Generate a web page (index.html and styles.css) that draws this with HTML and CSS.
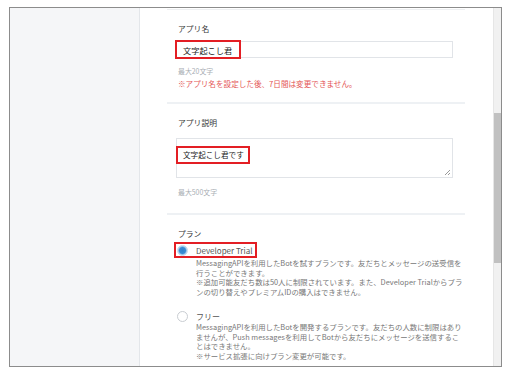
FILE: index.html
```html
<!DOCTYPE html>
<html lang="ja">
<head>
  <meta charset="UTF-8" />
  <meta name="viewport" content="width=device-width, initial-scale=1.0"/>
  <title>チャネル設定</title>
  <link rel="stylesheet" href="styles.css">
</head>
<body>

  <div class="frame">
    <aside class="sidebar"></aside>

    <main class="main">
      <div class="content">
        <div class="card">

          <!-- アプリ名 -->
          <section class="field">
            <div class="label">アプリ名</div>
            <div class="input">
              <span class="mark mark-name">文字起こし君</span>
            </div>
            <div class="help">最大20文字</div>
            <div class="note">※アプリ名を設定した後、7日間は変更できません。</div>
          </section>

          <!-- アプリ説明 -->
          <section class="field">
            <div class="label">アプリ説明</div>
            <div class="textarea">
              <span class="mark mark-desc">文字起こし君です</span>
            </div>
            <div class="help">最大500文字</div>
          </section>

          <!-- プラン -->
          <section class="field plan">
            <div class="label">プラン</div>

            <div class="option">
              <div class="option-row mark mark-plan">
                <span class="radio checked"></span>
                <span class="option-name">Developer Trial</span>
              </div>
              <p class="option-desc">
                MessagingAPIを利用したBotを試すプランです。友だちとメッセージの送受信を<br>
                行うことができます。<br>
                ※追加可能友だち数は50人に制限されています。また、Developer Trialからプラ<br>
                ンの切り替えやプレミアムIDの購入はできません。
              </p>
            </div>

            <div class="option">
              <div class="option-row">
                <span class="radio"></span>
                <span class="option-name">フリー</span>
              </div>
              <p class="option-desc">
                MessagingAPIを利用したBotを開発するプランです。友だちの人数に制限はあり<br>
                ませんが、Push messagesを利用してBotから友だちにメッセージを送信するこ<br>
                とはできません。<br>
                ※サービス拡張に向けプラン変更が可能です。
              </p>
            </div>
          </section>

        </div>
      </div>

      <div class="scrollbar"><div class="thumb"></div></div>
    </main>
  </div>

</body>
</html>
```

FILE: styles.css
```css
*, *::before, *::after {
  box-sizing: border-box;
}

body, html {
  margin: 0;
  padding: 0;
  background: #fff;
  font-family: "Noto Sans CJK JP", "Noto Sans", sans-serif;
  overflow: hidden;
}

.frame {
  margin: 7px 0 0 9px;
  width: 493px;
  height: 360px;
  border: 1px solid #8c8c8c;
  display: flex;
  overflow: hidden;
}

.sidebar {
  width: 130px;
  flex: none;
  background: #f5f6f8;
  border-right: 1px solid #e3e6ea;
}

.main {
  flex: 1;
  display: flex;
  min-width: 0;
}

.content {
  flex: 1;
  padding-left: 27px;
}

.card {
  width: 298px;
  margin-top: 1px;
  border-top: 1px solid #eef0f2;
}

.field {
  padding: 13px 0 12px 9px;
  border-bottom: 2px solid #eef1f4;
}

.field:nth-child(2) {
  padding-bottom: 15px;
}

.field.plan {
  border-bottom: none;
}

.label {
  padding-left: 2px;
  font-size: 7.8px;
  line-height: 12px;
  color: #333;
}

.mark {
  display: inline-flex;
  align-items: center;
  border: 2px solid #e31e24;
  white-space: nowrap;
}

.input {
  display: flex;
  width: 277px;
  height: 17px;
  margin-top: 6px;
  border: 1px solid #e1e4e8;
  background: #fff;
}

.mark-name {
  width: 66px;
  margin: -2px 0 -2px -2px;
  padding-left: 6px;
  font-size: 8.2px;
  color: #222;
}

.textarea {
  position: relative;
  width: 277px;
  height: 40px;
  margin-top: 9px;
  border: 1px solid #e1e4e8;
  background: #fff;
}

.textarea::after {
  content: "";
  position: absolute;
  right: 2px;
  bottom: 2px;
  width: 5px;
  height: 5px;
  background: linear-gradient(135deg, transparent 45%, #9a9a9a 45%, #9a9a9a 55%, transparent 55%, transparent 75%, #9a9a9a 75%, #9a9a9a 85%, transparent 85%);
}

.mark-desc {
  width: 74px;
  height: 18px;
  margin-left: -1px;
  padding-left: 5px;
  font-size: 7.6px;
  color: #222;
}

.help {
  margin-top: 7px;
  padding-left: 2px;
  font-size: 6.9px;
  line-height: 12px;
  color: #a9aeb4;
}

.field:nth-child(2) .help {
  margin-top: 8px;
}

.note {
  margin-top: 1px;
  padding-left: 2px;
  font-size: 7.6px;
  line-height: 12px;
  color: #e45555;
}

.option-row {
  display: flex;
  align-items: center;
  height: 16px;
  margin-top: 2px;
  margin-left: -2px;
  padding-left: 1px;
  border: 2px solid transparent;
}

.option-row.mark-plan {
  width: 83px;
  border-color: #e31e24;
}

.option + .option .option-row {
  margin-top: 12px;
}

.radio {
  width: 11px;
  height: 11px;
  flex: none;
  border-radius: 50%;
  border: 1px solid #c9cdd2;
  background: #fff;
}

.radio.checked {
  border: 1px solid #c2d9ee;
  background: radial-gradient(circle, #2f82cc 0, #3a8bd3 3px, #8fbde4 4px, #dceaf6 5px);
}

.option-name {
  margin-left: 8px;
  font-size: 8px;
  color: #555;
}

.option-desc {
  margin: 0;
  padding-left: 20px;
  font-size: 7.4px;
  line-height: 9.5px;
  color: #777;
  white-space: nowrap;
}

.option + .option .option-desc {
  margin-top: -2px;
}

.scrollbar {
  width: 8px;
  flex: none;
  background: #f1f1f1;
  border-left: 1px solid #e6e6e6;
  padding-top: 105px;
}

.thumb {
  height: 150px;
  background: #c1c1c1;
}
```
